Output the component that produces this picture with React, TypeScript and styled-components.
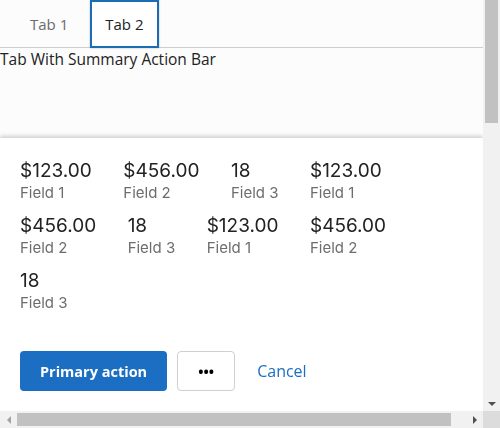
import React from "react";
import styled, { createGlobalStyle } from "styled-components";

const GlobalStyle = createGlobalStyle`
  html, body {
    margin: 0;
    padding: 0;
    background: #fcfcfc;
  }
  body {
    font-family: "Open Sans", "Liberation Sans", sans-serif;
    color: #222;
  }
`;

type Field = { value: string; label: string };

const fields: Field[] = [
  { value: "$123.00", label: "Field 1" },
  { value: "$456.00", label: "Field 2" },
  { value: "18", label: "Field 3" },
  { value: "$123.00", label: "Field 1" },
  { value: "$456.00", label: "Field 2" },
  { value: "18", label: "Field 3" },
  { value: "$123.00", label: "Field 1" },
  { value: "$456.00", label: "Field 2" },
  { value: "18", label: "Field 3" },
];

const App = () => {
  return (
    <Frame>
      <GlobalStyle />

      <Scroller>
        <Page>
          <TabList>
            <Tab>Tab 1</Tab>
            <Tab $active>Tab 2</Tab>
          </TabList>

          <Panel>Tab With Summary Action Bar</Panel>

          <ActionBar>
            <Summary>
              {fields.map((f, i) => (
                <Item key={i}>
                  <Value>{f.value}</Value>
                  <Label>{f.label}</Label>
                </Item>
              ))}
            </Summary>

            <Actions>
              <Primary>Primary action</Primary>
              <More>•••</More>
              <Cancel>Cancel</Cancel>
            </Actions>
          </ActionBar>
        </Page>
      </Scroller>

      {/* window scrollbars */}
      <VBar>
        <VThumb />
        <Spacer />
        <ArrowBtn>
          <Arrow $dir="down" />
        </ArrowBtn>
      </VBar>

      <HBar>
        <ArrowBtn>
          <Arrow $dir="left" $dim />
        </ArrowBtn>
        <HThumb />
        <Spacer />
        <ArrowBtn>
          <Arrow $dir="right" />
        </ArrowBtn>
      </HBar>

      <Corner />
    </Frame>
  );
};

export default App;

const Frame = styled.div`
  width: 500px;
  height: 428px;
  display: grid;
  grid-template-columns: 483px 17px;
  grid-template-rows: 411px 17px;
  overflow: hidden;
`;

const Scroller = styled.div`
  overflow: hidden;
`;

const Page = styled.div`
  min-height: 1316px;
  display: flex;
  flex-direction: column;
`;

const TabList = styled.div`
  display: flex;
  gap: 7px;
  padding-left: 15px;
  border-bottom: 1px solid #cfcfcf;
`;

const Tab = styled.button<{ $active?: boolean }>`
  height: 48px;
  padding: 0 13px;
  font-family: "Open Sans", sans-serif;
  font-size: 15px;
  background: ${(p) => (p.$active ? "#fff" : "transparent")};
  color: ${(p) => (p.$active ? "#222" : "#6b6b6b")};
  border: 2px solid ${(p) => (p.$active ? "#1b6cb4" : "transparent")};
  box-shadow: ${(p) => (p.$active ? "0 0 2px rgba(0,0,0,0.25)" : "none")};
  margin-bottom: -1px;
  cursor: pointer;
`;

const Panel = styled.div`
  flex: 1;
  padding-top: 1px;
  font-size: 15.5px;
  line-height: 20px;
`;

const ActionBar = styled.div`
  position: sticky;
  bottom: 0;
  background: #fff;
  box-shadow: 0 -2px 4px rgba(0, 0, 0, 0.18);
  padding: 21px 20px 20px;
`;

const Summary = styled.div`
  display: flex;
  flex-wrap: wrap;
  column-gap: 31.5px;
  row-gap: 11px;
`;

const Item = styled.div`
  display: flex;
  flex-direction: column;
`;

const Value = styled.div`
  font-family: Inter, "Open Sans", sans-serif;
  font-size: 19px;
  line-height: 24px;
  color: #222;
`;

const Label = styled.div`
  font-family: Inter, "Open Sans", sans-serif;
  font-size: 15px;
  line-height: 20px;
  color: #6d6d6d;
`;

const Actions = styled.div`
  display: flex;
  align-items: center;
  gap: 10px;
  margin-top: 38px;
`;

const Primary = styled.button`
  height: 40px;
  padding: 0 20px;
  border: none;
  border-radius: 4px;
  background: #1b6ec2;
  color: #fff;
  font-family: "Open Sans", sans-serif;
  font-weight: 700;
  font-size: 14.5px;
  cursor: pointer;
`;

const More = styled.button`
  height: 40px;
  width: 58px;
  border: 1px solid #cfcfcf;
  border-radius: 4px;
  background: #fff;
  color: #000;
  font-family: "Open Sans", sans-serif;
  font-size: 14px;
  font-weight: 700;
  cursor: pointer;
`;

const Cancel = styled.button`
  height: 40px;
  padding: 0 12px;
  border: none;
  background: none;
  color: #1b6ec2;
  font-family: "Open Sans", sans-serif;
  font-size: 16px;
  cursor: pointer;
`;

const VBar = styled.div`
  display: flex;
  flex-direction: column;
  background: #f1f1f1;
`;

const HBar = styled.div`
  display: flex;
  background: #f1f1f1;
`;

const VThumb = styled.div`
  height: 123px;
  margin: 0 2px;
  background: #c1c1c1;
`;

const HThumb = styled.div`
  width: 434px;
  margin: 2px 0;
  background: #c1c1c1;
`;

const Spacer = styled.div`
  flex: 1;
`;

const ArrowBtn = styled.div`
  width: 17px;
  height: 17px;
  flex: none;
  display: flex;
  align-items: center;
  justify-content: center;
`;

const Arrow = styled.div<{ $dir: "down" | "left" | "right"; $dim?: boolean }>`
  width: 0;
  height: 0;
  ${(p) => {
    const c = p.$dim ? "#a3a3a3" : "#505050";
    if (p.$dir === "down")
      return `border-left: 4px solid transparent; border-right: 4px solid transparent; border-top: 4px solid ${c}; margin-top: 2px;`;
    if (p.$dir === "left")
      return `border-top: 4px solid transparent; border-bottom: 4px solid transparent; border-right: 4px solid ${c};`;
    return `border-top: 4px solid transparent; border-bottom: 4px solid transparent; border-left: 4px solid ${c};`;
  }}
`;

const Corner = styled.div`
  background: #dcdcdc;
`;
